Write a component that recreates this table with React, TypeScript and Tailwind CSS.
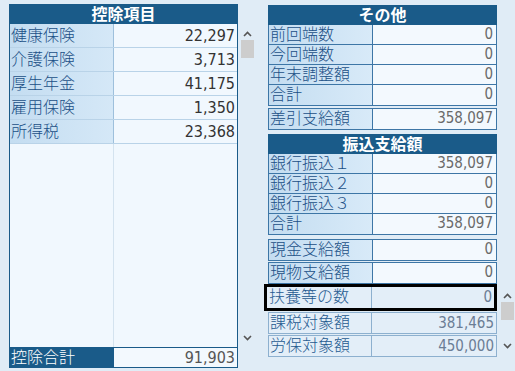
import React from "react";

// Liberation Sans first keeps the line boxes tight; the CJK glyphs come from Noto
const FONT = { fontFamily: '"Liberation Sans", "Noto Sans CJK JP", sans-serif' };
// numbers in the grid are narrow and thin
const NUM = { fontFamily: '"Liberation Sans Narrow", "DejaVu Sans Condensed", "Liberation Sans", sans-serif' };

type Item = { label: string; value: string };

const deductions: Item[] = [
	{ label: "健康保険", value: "22,297" },
	{ label: "介護保険", value: "3,713" },
	{ label: "厚生年金", value: "41,175" },
	{ label: "雇用保険", value: "1,350" },
	{ label: "所得税", value: "23,368" },
];

const others: Item[] = [
	{ label: "前回端数", value: "0" },
	{ label: "今回端数", value: "0" },
	{ label: "年末調整額", value: "0" },
	{ label: "合計", value: "0" },
];

const transfers: Item[] = [
	{ label: "銀行振込１", value: "358,097" },
	{ label: "銀行振込２", value: "0" },
	{ label: "銀行振込３", value: "0" },
	{ label: "合計", value: "358,097" },
];

function ScrollBar({ className }: { className: string }) {
	return (
		<div className={`flex flex-col items-center justify-between w-[13px] ${className}`}>
			<div className="flex flex-col items-center">
				<svg width="9" height="6" viewBox="0 0 9 6" className="mt-[4px]">
					<path d="M1 5 L4.5 1.5 L8 5" fill="none" stroke="#555" strokeWidth="1.6" />
				</svg>
				<div className="w-[13px] h-[18px] bg-[#cdcdcd] mt-[3px]" />
			</div>
			<svg width="9" height="6" viewBox="0 0 9 6" className="mb-[4px]">
				<path d="M1 1 L4.5 4.5 L8 1" fill="none" stroke="#555" strokeWidth="1.6" />
			</svg>
		</div>
	);
}

function SmallRow({ item, last }: { item: Item; last?: boolean }) {
	return (
		<div className={`flex h-[20px] ${last ? "" : "border-b border-[#3d76a6]"}`}>
			<div className="w-[104px] bg-gradient-to-r from-[#c4ddf1] to-[#d8eaf8] border-r border-[#3d76a6] text-[#1a4f86] text-[16px] font-light leading-[19px] pl-[1px] whitespace-nowrap">
				{item.label}
			</div>
			<div style={NUM} className="flex-1 bg-[#f3f9fe] text-right pr-[3px] text-[#6a6a6a] text-[15px] leading-[19px]">
				{item.value}
			</div>
		</div>
	);
}

function Header({ title }: { title: string }) {
	return (
		<div className="h-[19px] bg-[#1a5b89] text-white text-center font-bold text-[16px] leading-[19px]">
			{title}
		</div>
	);
}

function Boxed({ item, className = "" }: { item: Item; className?: string }) {
	return (
		<div className={`border border-[#3d76a6] ${className}`}>
			<SmallRow item={item} last />
		</div>
	);
}

function PlainRow({ item, selected }: { item: Item; selected?: boolean }) {
	return (
		<div
			className={`flex bg-[#e3eef8] ${
				selected ? "h-[27px] border-[3px] border-black -ml-[4px]" : "h-[22px] border border-[#8db0cf] mt-[1px]"
			}`}
		>
			<div
				className={`${selected ? "w-[105px] pl-[2px]" : "w-[103px] pl-[1px]"} border-r border-[#8db0cf] text-[#1f5a90] text-[16px] font-light leading-[20px] whitespace-nowrap`}
			>
				{item.label}
			</div>
			<div style={NUM} className="flex-1 text-right pr-[2px] text-[#6b7d95] text-[15px] leading-[20px]">
				{item.value}
			</div>
		</div>
	);
}

export default function App() {
	return (
		<div style={FONT} className="w-[515px] h-[371px] bg-[#e0ecf6] flex overflow-hidden">
			{/* 控除項目 */}
			<div className="ml-[9px] mt-[4px] w-[229px] h-[364px] flex flex-col border border-[#1a5b89]">
				<Header title="控除項目" />
				<div className="flex-1 relative bg-[#f1f8fe]">
					<div className="absolute left-[103px] top-0 bottom-0 w-px bg-[#d4e3ef]" />
					<div className="relative flex flex-col">
						{deductions.map((d) => (
							<div key={d.label} className="flex h-[24px] border-b border-[#b9d3e8]">
								<div className="w-[104px] bg-gradient-to-r from-[#c4ddf1] to-[#d5e8f7] border-r border-[#9ec0dc] text-[#1a4f86] text-[16px] font-light leading-[24px] pl-[1px]">
									{d.label}
								</div>
								<div style={NUM} className="flex-1 text-right pr-[2px] text-[#333] text-[16px] leading-[24px]">
									{d.value}
								</div>
							</div>
						))}
					</div>
				</div>
				<div className="flex h-[20px] border-t border-[#1a5b89]">
					<div className="w-[104px] bg-[#1a5b89] text-white text-[16px] font-light leading-[20px] pl-[1px]">控除合計</div>
					<div style={NUM} className="flex-1 bg-[#f3f9fe] text-right pr-[2px] text-[#555] text-[16px] leading-[20px]">
						91,903
					</div>
				</div>
			</div>
			<ScrollBar className="ml-[3px] mt-[27px] h-[318px]" />

			{/* その他 / 振込支給額 */}
			<div className="ml-[14px] mt-[5px] flex">
				<div className="w-[229px] flex flex-col">
					<div className="border border-[#1a5b89] border-b-0">
						<Header title="その他" />
					</div>
					<div className="border border-[#3d76a6] border-t-0">
						{others.map((o, i) => (
							<SmallRow key={o.label} item={o} last={i === others.length - 1} />
						))}
					</div>
					<Boxed item={{ label: "差引支給額", value: "358,097" }} className="mt-[2px]" />

					<div className="mt-[4px] border border-[#1a5b89] border-b-0">
						<Header title="振込支給額" />
					</div>
					<div className="border border-[#3d76a6] border-t-0">
						{transfers.map((o, i) => (
							<SmallRow key={o.label + i} item={o} last={i === transfers.length - 1} />
						))}
					</div>
					<Boxed item={{ label: "現金支給額", value: "0" }} className="mt-[4px]" />
					<Boxed item={{ label: "現物支給額", value: "0" }} className="mt-[1px]" />

					<div className="flex flex-col">
						<PlainRow item={{ label: "扶養等の数", value: "0" }} selected />
						<PlainRow item={{ label: "課税対象額", value: "381,465" }} />
						<PlainRow item={{ label: "労保対象額", value: "450,000" }} />
					</div>
				</div>
				<ScrollBar className="ml-[4px] mt-[284px] h-[64px]" />
			</div>
		</div>
	);
}
